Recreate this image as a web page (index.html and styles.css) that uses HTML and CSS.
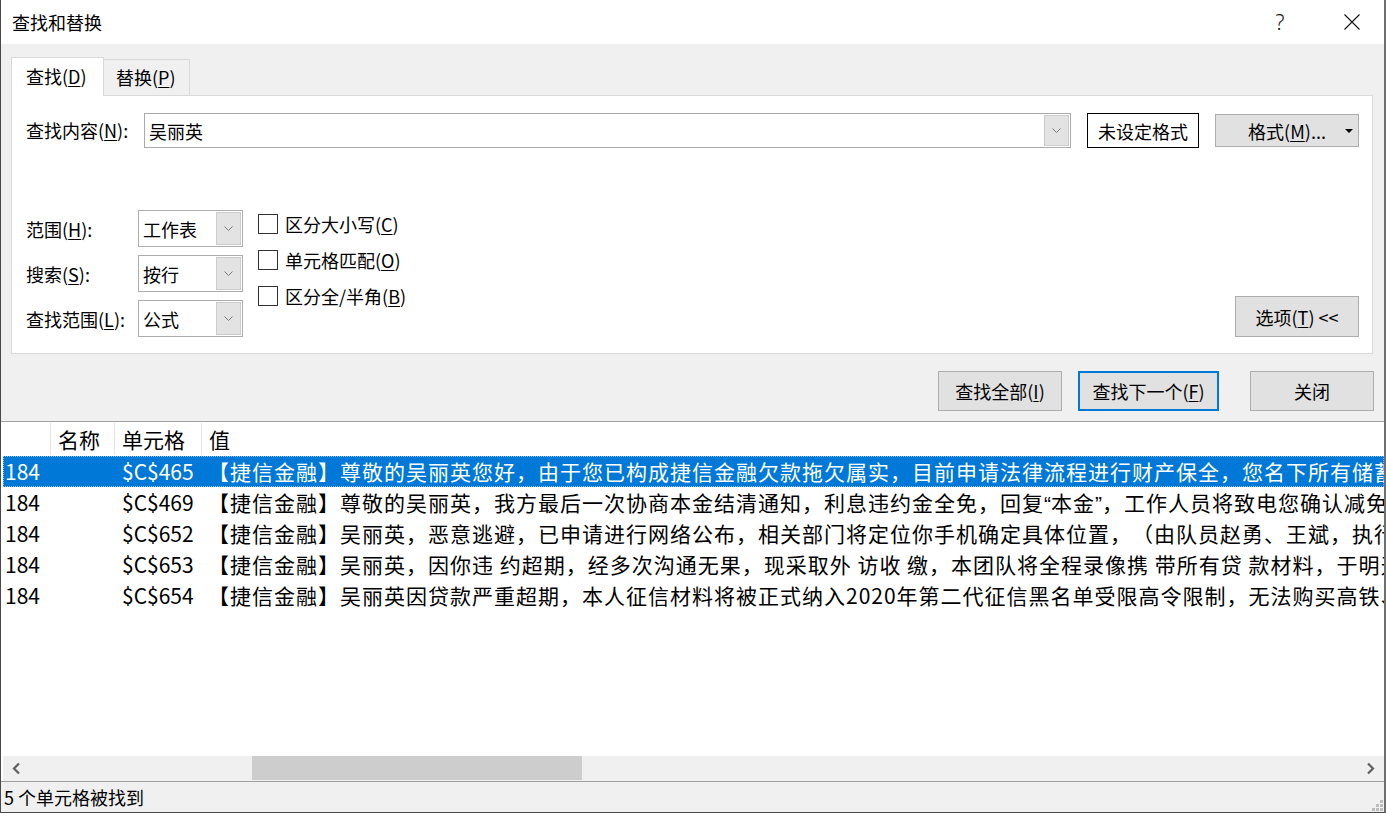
FILE: index.html
```html
<!DOCTYPE html>
<html lang="zh-CN">
<head>
<meta charset="utf-8">
<title>查找和替换</title>
<link rel="stylesheet" href="styles.css">
</head>
<body>
<div class="dialog">
  <div class="titlebar">
    <span class="title">查找和替换</span>
    <span class="tb-help">?</span>
    <span class="tb-close"><svg width="16" height="16" viewBox="0 0 16 16"><path d="M0.5 0.5L15.5 15.5M15.5 0.5L0.5 15.5" stroke="#111" stroke-width="1.1" fill="none"/></svg></span>
  </div>

  <div class="body">
    <div class="tabs">
      <div class="tab active">查找(<u>D</u>)</div>
      <div class="tab">替换(<u>P</u>)</div>
    </div>

    <div class="panel">
      <div class="find-row">
        <span class="find-label">查找内容(<u>N</u>):</span>
        <div class="combo">
          <span class="combo-text">吴丽英</span>
          <span class="drop"><svg width="9" height="5" viewBox="0 0 9 5"><path d="M0.5 0.5L4.5 4.5L8.5 0.5" fill="none" stroke="#7a7a7a" stroke-width="1"/></svg></span>
        </div>
        <div class="btn fmt-none">未设定格式</div>
        <div class="btn fmt"><span class="fmt-text">格式(<u>M</u>)...</span><svg class="fmt-arrow" width="8" height="4" viewBox="0 0 8 4"><path d="M0 0H8L4 4Z" fill="#000"/></svg></div>
      </div>

      <div class="options">
        <div class="selects">
          <span class="opt-label">范围(<u>H</u>):</span>
          <div class="select"><span class="select-text">工作表</span><span class="drop"><svg width="9" height="5" viewBox="0 0 9 5"><path d="M0.5 0.5L4.5 4.5L8.5 0.5" fill="none" stroke="#7a7a7a" stroke-width="1"/></svg></span></div>
          <span class="opt-label">搜索(<u>S</u>):</span>
          <div class="select"><span class="select-text">按行</span><span class="drop"><svg width="9" height="5" viewBox="0 0 9 5"><path d="M0.5 0.5L4.5 4.5L8.5 0.5" fill="none" stroke="#7a7a7a" stroke-width="1"/></svg></span></div>
          <span class="opt-label">查找范围(<u>L</u>):</span>
          <div class="select"><span class="select-text">公式</span><span class="drop"><svg width="9" height="5" viewBox="0 0 9 5"><path d="M0.5 0.5L4.5 4.5L8.5 0.5" fill="none" stroke="#7a7a7a" stroke-width="1"/></svg></span></div>
        </div>
        <div class="checks">
          <div class="check"><span class="box"></span><span>区分大小写(<u>C</u>)</span></div>
          <div class="check"><span class="box"></span><span>单元格匹配(<u>O</u>)</span></div>
          <div class="check"><span class="box"></span><span>区分全/半角(<u>B</u>)</span></div>
        </div>
        <div class="btn opt-btn">选项(<u>T</u>) &lt;&lt;</div>
      </div>
    </div>

    <div class="actions">
      <div class="btn act">查找全部(<u>I</u>)</div>
      <div class="btn act primary">查找下一个(<u>F</u>)</div>
      <div class="btn act close">关闭</div>
    </div>
  </div>

  <div class="results">
    <div class="list">
      <div class="row head"><span class="c1"></span><span class="c2">名称</span><span class="c3">单元格</span><span class="c4">值</span></div>
      <div class="row sel"><span class="c1">184</span><span class="c2"></span><span class="c3">$C$465</span><span class="c4">【捷信金融】尊敬的吴丽英您好，由于您已构成捷信金融欠款拖欠属实，目前申请法律流程进行财产保全，您名下所有储蓄卡将被冻结</span></div>
      <div class="row"><span class="c1">184</span><span class="c2"></span><span class="c3">$C$469</span><span class="c4">【捷信金融】尊敬的吴丽英，我方最后一次协商本金结清通知，利息违约金全免，回复<span class="q">“</span>本金<span class="q">”</span>，工作人员将致电您确认减免金额</span></div>
      <div class="row"><span class="c1">184</span><span class="c2"></span><span class="c3">$C$652</span><span class="c4">【捷信金融】吴丽英，恶意逃避，已申请进行网络公布，相关部门将定位你手机确定具体位置，（由队员赵勇、王斌，执行上门</span></div>
      <div class="row"><span class="c1">184</span><span class="c2"></span><span class="c3">$C$653</span><span class="c4">【捷信金融】吴丽英，因你违 约超期，经多次沟通无果，现采取外 访收 缴，本团队将全程录像携 带所有贷 款材料，于明天上门</span></div>
      <div class="row"><span class="c1">184</span><span class="c2"></span><span class="c3">$C$654</span><span class="c4">【捷信金融】吴丽英因贷款严重超期，本人征信材料将被正式纳入2020年第二代征信黑名单受限高令限制，无法购买高铁、飞机票</span></div>
    </div>
    <div class="hscroll">
      <span class="sb-arrow"><svg width="20" height="25" viewBox="0 0 20 25"><path d="M16 7.5L11 12.5L16 17.5" fill="none" stroke="#606060" stroke-width="2.2"/></svg></span>
      <div class="track"><div class="thumb"></div></div>
      <span class="sb-arrow"><svg width="20" height="25" viewBox="0 0 20 25"><path d="M4 7.5L9 12.5L4 17.5" fill="none" stroke="#606060" stroke-width="2.2"/></svg></span>
    </div>
  </div>

  <div class="status">
    <span class="status-text">5 个单元格被找到</span>
    <svg class="grip" width="12" height="12" viewBox="0 0 12 12"><g fill="#bdbdbd"><rect x="9" y="1" width="3" height="3"/><rect x="5" y="5" width="3" height="3"/><rect x="9" y="5" width="3" height="3"/><rect x="1" y="9" width="3" height="3"/><rect x="5" y="9" width="3" height="3"/><rect x="9" y="9" width="3" height="3"/></g></svg>
  </div>
</div>
</body>
</html>
```

FILE: styles.css
```css
* { box-sizing: border-box; }
html, body { margin: 0; padding: 0; }
body {
  width: 1386px;
  height: 813px;
  overflow: hidden;
  font-family: "Noto Sans CJK SC", "Noto Sans", sans-serif;
  font-size: 18px;
  color: #000;
  background: #f0f0f0;
  text-spacing-trim: space-all;
}
u { text-decoration: underline; text-decoration-thickness: 1px; text-underline-offset: 2px; }

.dialog {
  height: 813px;
  display: flex;
  flex-direction: column;
  border-left: 1px solid #4a4a4a;
  border-right: 2px solid #6e6e6e;
  border-bottom: 1px solid #4a4a4a;
}

/* title bar */
.titlebar {
  flex: none;
  height: 44px;
  background: #fff;
  display: flex;
  align-items: center;
  padding-left: 11px;
  gap: 16px;
}
.title { font-size: 18px; line-height: 44px; }
.tb-help {
  margin-left: auto;
  width: 46px;
  text-align: center;
  font-family: "Noto Sans", sans-serif;
  font-weight: 300;
  font-size: 21px;
  line-height: 44px;
  color: #111;
}
.tb-close {
  width: 65px;
  height: 44px;
  display: flex;
  align-items: center;
  justify-content: center;
}

/* body */
.body {
  flex: none;
  height: 377px;
  display: flex;
  flex-direction: column;
  padding-top: 13px;
}
.tabs {
  display: flex;
  align-items: flex-end;
  height: 38px;
  padding-left: 10px;
  position: relative;
  z-index: 1;
}
.tab {
  height: 36px;
  width: 86px;
  border: 1px solid #d9d9d9;
  border-left: none;
  border-bottom: none;
  background: #f0f0f0;
  padding-left: 12px;
  line-height: 35px;
  font-size: 18px;
}
.tab.active {
  height: 39px;
  width: 93px;
  margin-bottom: -1px;
  border-left: 1px solid #d9d9d9;
  background: #fff;
  padding-left: 14px;
  line-height: 37px;
}

.panel {
  height: 259px;
  margin: 0 11px 0 10px;
  background: #fff;
  border: 1px solid #d9d9d9;
  padding: 17px 13px 16px 14px;
  display: flex;
  flex-direction: column;
}

.find-row {
  height: 35px;
  display: flex;
  align-items: center;
}
.find-label { flex: 0 0 118px; line-height: 35px; }
.combo {
  flex: 1;
  height: 35px;
  border: 1px solid #ababab;
  display: flex;
  align-items: center;
  padding: 1px;
}
.combo-text { flex: 1; padding-left: 3px; line-height: 30px; font-size: 18px; }
.drop {
  width: 25px;
  height: 31px;
  flex: none;
  background: #e3e3e3;
  border: 1px solid #cccccc;
  display: flex;
  align-items: center;
  justify-content: center;
}

.btn {
  background: #e1e1e1;
  border: 1px solid #adadad;
  display: flex;
  align-items: center;
  justify-content: center;
  font-size: 18px;
  line-height: 1;
  flex: none;
}
.fmt-none {
  margin-left: 16px;
  width: 112px;
  height: 35px;
  background: #fff;
  border: 1px solid #000;
}
.fmt {
  margin-left: 16px;
  width: 144px;
  height: 33px;
  display: grid;
  grid-template-columns: 1fr auto 1fr;
  align-items: center;
}
.fmt-text { grid-column: 2; }
.fmt-arrow { grid-column: 3; justify-self: end; margin-right: 5px; }

.options {
  margin-top: 62px;
  height: 127px;
  display: flex;
}
.selects {
  display: grid;
  grid-template-columns: 112px 105px;
  grid-auto-rows: 37px;
  row-gap: 8px;
  align-items: center;
}
.select {
  height: 37px;
  border: 1px solid #adadad;
  display: flex;
  align-items: center;
  padding: 1px;
}
.select-text { flex: 1; padding-left: 3px; line-height: 30px; }
.select .drop { height: 33px; }

.checks {
  margin-left: 15px;
  padding-top: 4px;
  display: flex;
  flex-direction: column;
  gap: 16px;
}
.check {
  height: 20px;
  display: flex;
  align-items: center;
  gap: 7px;
  line-height: 20px;
}
.box {
  width: 20px;
  height: 20px;
  border: 1px solid #333;
  background: #fff;
  flex: none;
}
.opt-btn {
  margin-left: auto;
  align-self: flex-end;
  width: 124px;
  height: 41px;
}

.actions {
  margin-top: 17px;
  height: 40px;
  display: flex;
  justify-content: flex-end;
  gap: 16px;
  padding-right: 10px;
}
.act { width: 124px; height: 40px; }
.act.primary { width: 141px; border: 2px solid #0078d7; }
.act.close { margin-left: 15px; }

/* results */
.results {
  flex: none;
  height: 360px;
  background: #fff;
  border-top: 1px solid #a0a0a0;
  display: flex;
  flex-direction: column;
}
.list {
  flex: 1;
  overflow: hidden;
  font-size: 21px;
}
.row {
  display: flex;
  height: 31px;
  margin-left: 2px;
  align-items: center;
  white-space: nowrap;
  line-height: 29px;
}
.row.head { height: 34px; }
.c1 { flex: 0 0 47px; padding-left: 2px; }
.c2 { flex: 0 0 64px; padding-left: 7px; border-left: 1px solid transparent; }
.c3 { flex: 0 0 87px; padding-left: 7px; border-left: 1px solid transparent; }
.c4 { flex: 1; padding-left: 6px; border-left: 1px solid transparent; letter-spacing: 1px; overflow: hidden; }
.head .c2, .head .c3, .head .c4 {
  border-left-color: #e5e5e5;
  height: 32px;
  line-height: 32px;
}
.head .c4 { padding-left: 7px; }
.q { font-family: "Liberation Sans", sans-serif; letter-spacing: 0; }
.row.sel {
  background: #0078d7;
  color: #fff;
  outline: 1px dotted #8cc0ee;
  outline-offset: -1px;
}

.hscroll {
  flex: none;
  height: 25px;
  margin-left: 2px;
  background: #f0f0f0;
  display: flex;
}
.sb-arrow { width: 20px; height: 25px; flex: none; }
.track { flex: 1; }
.thumb {
  margin-left: 229px;
  width: 330px;
  height: 24px;
  background: #cdcdcd;
}

/* status */
.status {
  flex: 1;
  border-top: 1px solid #a0a0a0;
  background: #f0f0f0;
  display: flex;
  padding-left: 3px;
}
.status-text { line-height: 30px; font-size: 18px; }
.grip { margin-left: auto; align-self: flex-end; margin-right: 1px; margin-bottom: 1px; }
```
